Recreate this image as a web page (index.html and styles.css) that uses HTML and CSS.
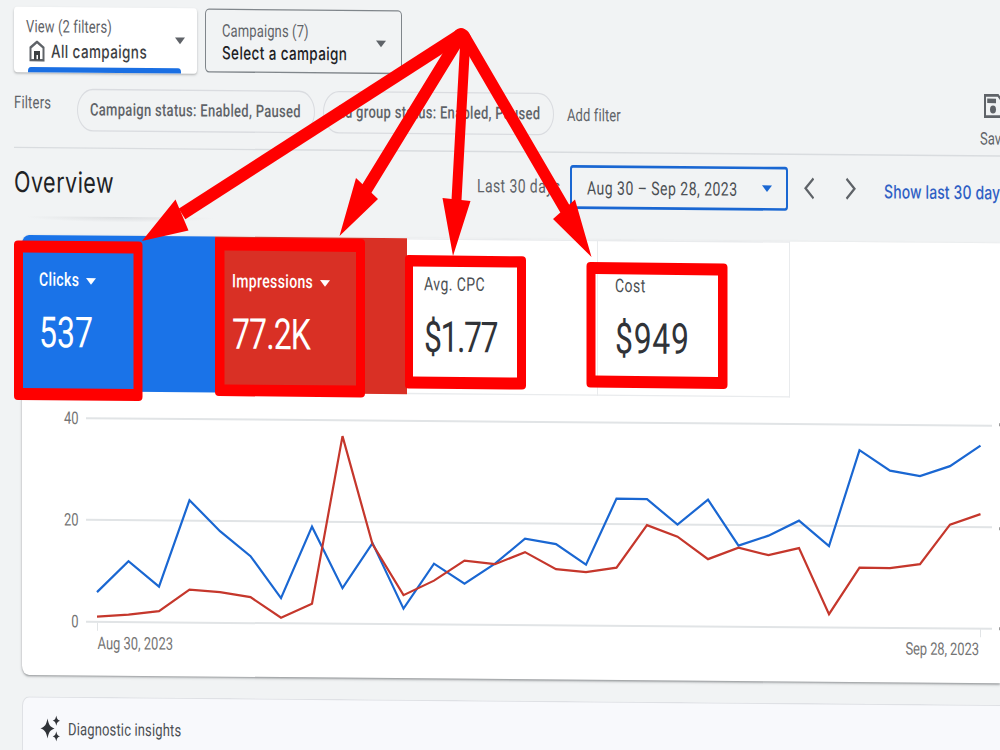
FILE: index.html
```html
<!DOCTYPE html>
<html lang="en">
<head>
<meta charset="utf-8">
<title>Overview</title>
<link rel="stylesheet" href="styles.css">
</head>
<body>
<div class="viewport">
  <main class="page">
    <header class="selectors">
      <div class="selector selector-active">
        <div class="selector-text">
          <span class="caption">View (2 filters)</span>
          <span class="choice choice-all"><svg class="home" width="16" height="16" viewBox="0 0 16 16"><path d="M1.500 15V5.500L8 1.200 14.500 5.500V15z" fill="none" stroke="#5f6368" stroke-width="2"/><path d="M5 8h6v6.500H9V11H7.500v3.500H5z" fill="#3c4043"/></svg>All campaigns</span>
        </div>
        <i class="caret"></i>
        <i class="active-bar"></i>
      </div>
      <div class="selector selector-outline">
        <div class="selector-text">
          <span class="caption">Campaigns (7)</span>
          <span class="choice choice-select">Select a campaign</span>
        </div>
        <i class="caret"></i>
      </div>
    </header>

    <section class="filters">
      <span class="filters-label">Filters</span>
      <span class="chip chip-campaign">Campaign status: Enabled, Paused</span>
      <span class="chip chip-group">Ad group status: Enabled, Paused</span>
      <span class="add-filter">Add filter</span>
      <span class="save"><svg width="20" height="18" viewBox="0 0 20 18"><path d="M2 1h13l3.500 3.500V17H2z" fill="none" stroke="#5f6368" stroke-width="2"/><path d="M4.200 3.500H13v3.400H4.200z" fill="#5f6368"/><circle cx="10" cy="11.700" r="3" fill="#5f6368"/></svg><span>Save</span></span>
    </section>

    <section class="title-row">
      <h1>Overview</h1>
      <span class="range-label">Last 30 days</span>
      <div class="date-box"><span>Aug 30 – Sep 28, 2023</span><i class="caret caret-blue"></i></div>
      <svg class="chevron" width="12" height="18" viewBox="0 0 12 18"><path d="M10.500 1.500 2.500 9l8 7.500" fill="none" stroke="#5f6368" stroke-width="2"/></svg>
      <svg class="chevron next" width="12" height="18" viewBox="0 0 12 18"><path d="m1.500 1.500 8 7.500-8 7.500" fill="none" stroke="#5f6368" stroke-width="2"/></svg>
      <a class="show-last">Show last 30 days</a>
    </section>
    <div class="scroll-shadow"></div>

    <section class="card">
      <div class="scorecards">
        <div class="score score-blue"><span class="label">Clicks<i class="caret caret-white"></i></span><b>537</b></div>
        <div class="score score-red"><span class="label">Impressions<i class="caret caret-white"></i></span><b class="tight">77.2K</b></div>
        <div class="score"><span class="label">Avg. CPC</span><b class="tighter">$1.77</b></div>
        <div class="score"><span class="label">Cost</span><b class="loose">$949</b></div>
      </div>
      <svg class="chart" width="978" height="213" viewBox="22 292.500 978 213">
        <g transform="matrix(1 -.00653 0 .75 0 0)" fill="none">
          <g stroke="#e1e4e6" stroke-width="2">
            <path d="M86 417.500 992 425M86 519.200 992 526.500M86 621.200 992 628"/>
            <path d="M97.500 622v8M980.500 628.500v8" stroke-width="1"/>
            <path d="M999 424h1M999 528h1M999 628h1" stroke="#9a9a9a" stroke-width="3"/>
          </g>
          <path stroke="#1a67d2" stroke-width="2.200" d="M97 591.500 128.500 560.500 159 586 189.500 499.500 220 530.500 250.500 555.500 281 597.500 312 526 342.500 587.500 372.500 542.500 403.500 608 434 563 464.500 583 495 563 525 538 556 543.500 586 564 616.500 498 647 498.500 677.500 524 708 499 738.500 545 768.500 535 799 520 829 545.500 859.500 449.500 890 470 920 475.500 950 465.500 980.500 445"/>
          <path stroke="#c5372c" stroke-width="2.200" d="M97 616 128.500 614 159 610.500 189.500 589 220 591.500 250.500 596.500 281 617 312 603 342.500 435.500 372.500 543.500 403.500 594.500 434 580 464.500 560 495 563.500 525 551.500 556 568.500 586 571.500 616.500 567 647 524.500 677.500 536 708 558.500 738.500 547 768.500 554.500 799 547.500 829 613.500 859.500 567 890 567.500 920 563.500 950 524 980.500 513.500"/>
        </g>
        <g class="axis">
          <text x="78.500" y="317" text-anchor="end">40</text>
          <text x="78.500" y="393.200" text-anchor="end">20</text>
          <text x="78.500" y="469.500" text-anchor="end">0</text>
          <text x="97.500" y="485.700" textLength="75.500">Aug 30, 2023</text>
          <text x="905.500" y="484.500" textLength="73.500">Sep 28, 2023</text>
        </g>
      </svg>
    </section>

    <section class="insights">
      <svg width="22" height="20" viewBox="0 0 22 20"><g fill="#303338"><path d="M7.500 2.500c1.400 4.900 2.300 5.900 7 7.500-4.700 1.600-5.600 2.600-7 7.500-1.400-4.900-2.300-5.900-7-7.500 4.700-1.600 5.600-2.600 7-7.500z"/><path d="M16.300.2c.8 2.600 1.200 3.100 3.600 3.900-2.400.8-2.800 1.300-3.600 3.900-.8-2.600-1.200-3.100-3.600-3.900 2.400-.8 2.800-1.300 3.600-3.900zM16.300 12c.8 2.600 1.200 3.100 3.600 3.900-2.400.8-2.800 1.300-3.600 3.900-.8-2.600-1.200-3.100-3.600-3.900 2.400-.8 2.800-1.300 3.600-3.900z"/></g></svg>
      <span>Diagnostic insights</span>
    </section>
  </main>

  <svg class="annotations" width="1000" height="750" viewBox="0 0 1000 750">
    <g fill="#f00" fill-rule="evenodd">
      <path d="M18 240.500 138.500 241.500Q142.500 241.500 142.500 245.500V397Q142.500 401 138.500 401L18 400Q14 400 14 396V244.500Q14 240.500 18 240.500zM23 252.500V388L133.500 389V253.500z"/>
      <path d="M216 237.500 361 239Q365 239 365 243V393.500Q365 397.500 361 397.500L219 396Q215 396 215 392V238.500zM224.500 250.500V384.500L356 385.500V252z"/>
      <path d="M408.500 255 522 256.300Q526 256.300 526 260.300V385.500Q526 389.500 522 389.500L408.500 388.500Q405 388.500 405 385V259Q405 255 408.500 255zM413 266.500V376.500L517 377.500V267.500z"/>
      <path d="M590.500 262 723.500 263.500Q727.500 263.500 727.500 267.500V385Q727.500 389 723.500 389L590.500 387.500Q586.500 387.500 586.500 383.500V266Q586.500 262 590.500 262zM595.500 274V375.500L718 377V275.500z"/>
      <path d="M142 241 175.500 199.500 188.500 230.500zM339.500 236 356 178 378 199zM453 256 442.500 198 470.500 201zM591.500 257 553 219 575 199.500z"/>
    </g>
    <g fill="none" stroke="#f00" stroke-linecap="round">
      <path d="M461 34.500 460 35" stroke-width="13"/>
      <path d="M461 34.500 182 214" stroke-width="12.500" stroke-linecap="butt"/>
      <path d="M461 35 366 190" stroke-width="12"/>
      <path d="M465.500 37 456.500 200" stroke-width="10"/>
      <path d="M463.500 35 565 209" stroke-width="11.500"/>
    </g>
  </svg>
</div>
</body>
</html>
```
FILE: styles.css
```css
* { box-sizing: border-box; }
body { margin: 0; background: #f1f3f4; font-family: Roboto, "Liberation Sans", sans-serif; color: #5f6368; }
.viewport { position: relative; width: 1000px; height: 750px; overflow: hidden; background: #f1f3f4; }
/* The captured view is stretched vertically and leans slightly to the right. */
.page { width: 1000px; height: 562px; padding-top: 5px; transform: matrix(1, .0087, 0, 1.3333, 0, 0); transform-origin: 0 0; font-size: 13px; white-space: nowrap; }
svg { display: block; flex: none; }
.caret { width: 0; height: 0; border: 5.500px solid transparent; border-top: 5.500px solid #5f6368; border-bottom: 0; flex: none; }

.selectors { display: flex; gap: 8px; height: 60px; padding-left: 14px; }
.selector { position: relative; display: flex; align-items: center; justify-content: space-between; }
.selector-active { width: 183px; height: 49px; padding: 0 12px; background: #fff; border-radius: 3px; box-shadow: 0 1px 2px rgba(60,64,67,.35); }
.selector-outline { width: 197px; height: 48px; padding: 1px 15px 0 16px; border: 1px solid #80868b; border-radius: 4px; }
.selector-outline .caret { margin-top: 1px; }
.selector-text { display: flex; flex-direction: column; line-height: 18px; }
.selector-active .selector-text { margin-top: -2px; }
.selector-outline .selector-text { line-height: 17px; }
.caption { letter-spacing: .120px; }
.choice { display: flex; align-items: center; font-family: Inter, Roboto, sans-serif; font-weight: 500; font-size: 13.500px; color: #3c4043; letter-spacing: .4px; }
.choice-all { gap: 6px; padding-left: 3px; }
.choice-select { color: #202124; letter-spacing: .380px; }
.active-bar { position: absolute; left: 14px; bottom: 0; width: 153px; height: 4px; border-radius: 3px 3px 0 0; background: #1a6fe3; }

.filters { display: flex; height: 46px; margin-left: 14px; border-bottom: 1px solid #d9dcdf; }
.filters > * { flex: none; }
.filters-label { width: 63px; line-height: 24px; letter-spacing: .2px; }
.chip { height: 32px; margin-top: .5px; padding-left: 12px; line-height: 30px; border: 1px solid #dadce0; border-radius: 16px; font-weight: 500; }
.chip-campaign { width: 238px; margin-right: 8px; letter-spacing: .3px; }
.chip-group { width: 231px; letter-spacing: .290px; margin-right: 13px; }
.add-filter { width: 413px; line-height: 36px; letter-spacing: .1px; }
.save { display: flex; flex-direction: column; width: 30px; }
.save svg { margin: -1px 0 0 3px; }
.save span { line-height: 16px; margin-top: 8px; }

.title-row { display: flex; align-items: center; height: 52px; padding: 0 0 0 14px; }
.title-row > * { flex: none; }
h1 { width: 463px; margin: -3px 0 0; font: 400 21.500px/28px Inter, Roboto, sans-serif; letter-spacing: .5px; color: #202124; }
.range-label { width: 93px; margin-top: -2px; font-size: 14px; letter-spacing: .4px; }
.date-box { display: flex; align-items: center; justify-content: space-between; width: 218px; height: 33px; margin-top: -1px; padding: 0 14px 0 15px; border: 2px solid #1a67d2; border-radius: 3px; font-size: 14px; letter-spacing: .480px; color: #4b4f53; }
.caret-blue { border-top-color: #1a67d2; }
.chevron { margin: -2px 0 0 15px; }
.next { margin-left: 30px; }
.show-last { margin: 0 0 0 27px; font: 500 14px Inter, Roboto, sans-serif; letter-spacing: .1px; color: #2f5fc4; }
.scroll-shadow { height: 4px; width: 190px; margin: -1px 0 10px 25px; background: radial-gradient(ellipse 50% 100% at 50% 0, #dcdee0, #f1f3f4); }

.card { margin-left: 22px; height: 330px; background: #fff; border-radius: 7px 0 0 7px; box-shadow: 0 1px 2px rgba(60,64,67,.5); overflow: clip; overflow-clip-margin: 5px; }
.scorecards { display: grid; grid-template-columns: 193px 192px 191px 192px; height: 117px; }
.score { display: flex; flex-direction: column; padding: 24px 16px 0 17px; border: 1px solid #e9ebed; border-left: 0; color: #4b4f53; }
.score-blue, .score-red { border: 0; color: #fff; }
.score-blue { background: #1a73e8; border-radius: 7px 0 0 0; }
.score-red { background: #d93025; }
.label { display: flex; align-items: center; font-size: 14px; line-height: 18px; letter-spacing: .450px; }
.score-blue .label, .score-red .label { font-weight: 500; letter-spacing: .350px; }
.caret-white { margin: 2px 0 0 7px; border-top-color: #fff; }
.score b { margin-top: 12px; font-size: 32px; line-height: 38px; font-weight: 400; color: inherit; }
.score:not(.score-blue):not(.score-red) b { color: #303338; }
.tight { letter-spacing: -.9px; }
.tighter { letter-spacing: -1.500px; }
.loose { letter-spacing: .7px; }
.axis { font: 13px Roboto, sans-serif; fill: #757575; }

.insights { display: flex; align-items: center; gap: 6px; height: 60px; margin: 16px 0 0 22px; padding: 0 0 12px 17px; background: #f8f9fc; border: 1px solid #dfe1e5; border-radius: 7px 0 0 0; border-right: 0; color: #4b4f53; letter-spacing: .150px; }
.annotations { position: absolute; inset: 0; }
```
